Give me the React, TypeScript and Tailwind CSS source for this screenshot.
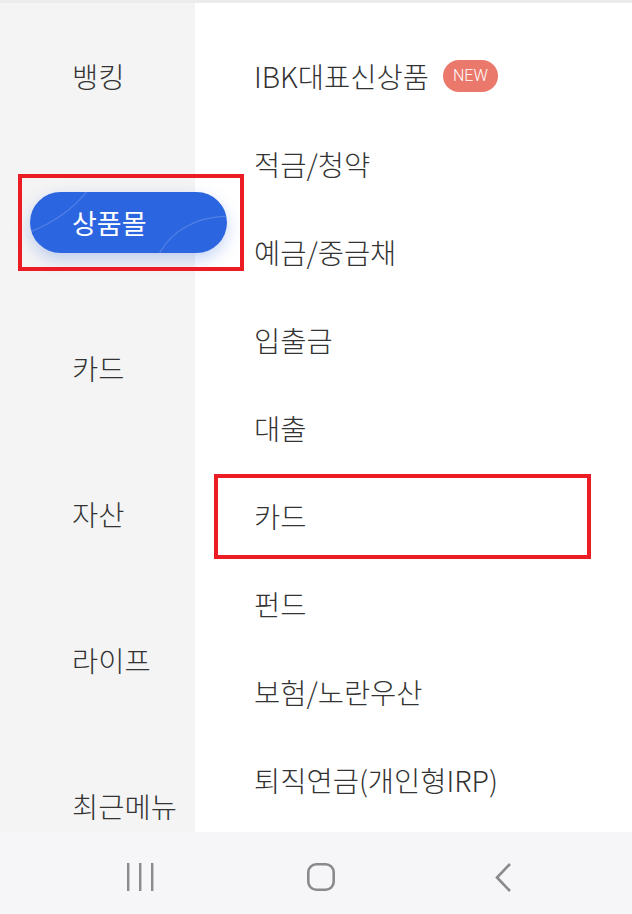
import React from "react";

const leftItems = ["뱅킹", "상품몰", "카드", "자산", "라이프", "최근메뉴"];
const rightItems = [
  "IBK대표신상품",
  "적금/청약",
  "예금/중금채",
  "입출금",
  "대출",
  "카드",
  "펀드",
  "보험/노란우산",
  "퇴직연금(개인형IRP)",
];

const font = { fontFamily: '"Noto Sans CJK KR", "Noto Sans", sans-serif' };

export default function App() {
  return (
    <div className="relative w-[632px] h-[914px] overflow-hidden bg-white" style={font}>
      <div className="h-[3px] bg-[#ececec]" />
      <div className="flex h-[829px] overflow-hidden">
        <div className="relative z-10 w-[195px] shrink-0 bg-[#f4f4f4] flex flex-col">
          {leftItems.map((t) =>
            t === "상품몰" ? (
              <div key={t} className="h-[146px] shrink-0 flex items-center pl-[30px]">
                <div className="relative shrink-0 w-[197px] h-[61px] rounded-full bg-[#2c65e0] shadow-[0_6px_16px_rgba(44,101,224,0.28)] overflow-hidden flex items-center pl-[42px]">
                  <svg className="absolute inset-0" width="197" height="61" viewBox="0 0 197 61" fill="none">
                    <path d="M0 40 C 25 30, 45 15, 58 -2" stroke="rgba(255,255,255,0.18)" strokeWidth="1.2" />
                    <path d="M128 64 C 140 40, 165 24, 200 24" stroke="rgba(255,255,255,0.18)" strokeWidth="1.2" />
                  </svg>
                  <span className="relative text-white text-[27px] font-normal leading-none">{t}</span>
                </div>
              </div>
            ) : (
              <div key={t} className="h-[146px] shrink-0 flex items-center pl-[72px] text-[28.5px] font-light text-[#333] leading-none">
                {t}
              </div>
            )
          )}
        </div>
        <div className="flex-1 flex flex-col pt-[29px]">
          {rightItems.map((t, i) => (
            <div key={t} className="h-[88px] shrink-0 flex items-center pl-[59px] text-[28.5px] font-light text-[#333] leading-none">
              <span>{t}</span>
              {i === 0 && (
                <span className="ml-[14px] w-[55px] h-[32px] rounded-full bg-[#ea786b] text-white text-[16px] flex items-center justify-center" style={{ fontFamily: '"Roboto", "Noto Sans", sans-serif' }}>
                  NEW
                </span>
              )}
            </div>
          ))}
        </div>
      </div>
      <div className="relative h-[82px] bg-[#f6f6f8]">
        <svg className="absolute left-[124px] top-[30px]" width="32" height="30" viewBox="0 0 32 30">
          <rect x="3" y="1" width="2.4" height="28" fill="#8a8a8a" />
          <rect x="15" y="1" width="2.4" height="28" fill="#8a8a8a" />
          <rect x="27" y="1" width="2.4" height="28" fill="#8a8a8a" />
        </svg>
        <svg className="absolute left-[305px] top-[29px]" width="32" height="32" viewBox="0 0 32 32">
          <rect x="3.3" y="3.3" width="25.4" height="25.4" rx="8" fill="none" stroke="#8a8a8a" strokeWidth="2.6" />
        </svg>
        <svg className="absolute left-[492px] top-[29px]" width="24" height="32" viewBox="0 0 24 32">
          <path d="M18 3 L5 16.5 L18 30" fill="none" stroke="#8a8a8a" strokeWidth="2.6" />
        </svg>
      </div>
      <div className="absolute z-20 left-[18px] top-[174px] w-[226px] h-[97px] border-[4px] border-[#ec1c24]" />
      <div className="absolute z-20 left-[214px] top-[474px] w-[377px] h-[85px] border-[4px] border-[#ec1c24]" />
    </div>
  );
}
